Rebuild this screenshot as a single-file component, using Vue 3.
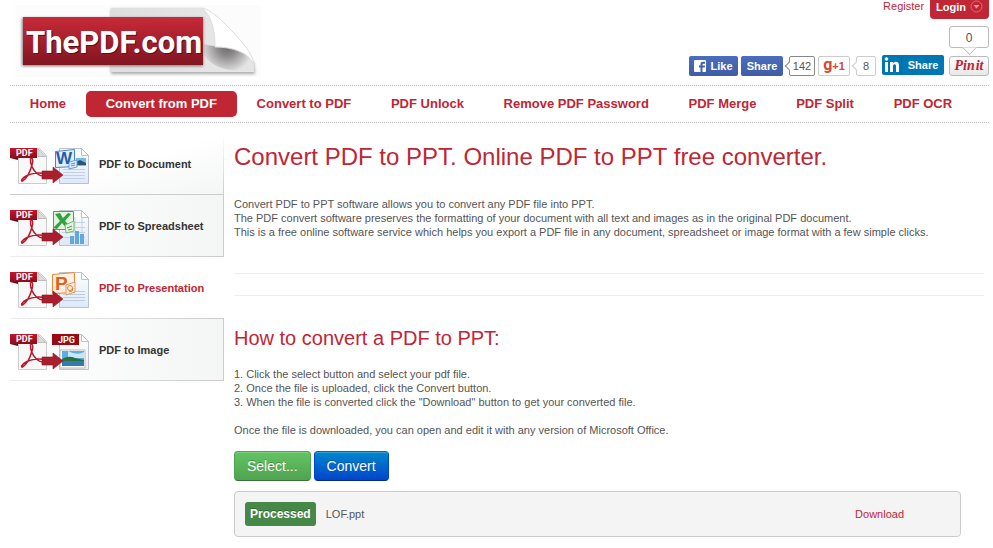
<template>
  <div class="page">
    <header class="header">
      <a href="#" class="logo" aria-label="ThePDF.com">
        <svg width="246" height="72" viewBox="0 0 246 72">
          <defs>
            <linearGradient id="logo-red" x1="0" y1="0" x2="0" y2="1">
              <stop offset="0" stop-color="#c92a38" />
              <stop offset="1" stop-color="#801520" />
            </linearGradient>
            <linearGradient id="logo-paper" x1="0" y1="0" x2="1" y2="0">
              <stop offset="0" stop-color="#dedede" />
              <stop offset="1" stop-color="#e8e8e8" />
            </linearGradient>
            <radialGradient id="logo-fold" gradientUnits="userSpaceOnUse" cx="212" cy="42" r="26">
              <stop offset="0" stop-color="#6b6b6b" />
              <stop offset="0.35" stop-color="#8d8a8a" />
              <stop offset="1" stop-color="#e4e4e4" />
            </radialGradient>
            <filter id="logo-blur"><feGaussianBlur stdDeviation="1.5" /></filter>
          </defs>
          <rect width="246" height="72" fill="#fcfcfc" />
          <path d="M96 4H187L239 58L240 69H96Z" fill="#aaa" filter="url(#logo-blur)" />
          <path d="M96 3H187L239 56V67H96Z" fill="url(#logo-paper)" />
          <path d="M188 38C194 42 206 41 214 42C226 43 235 49 239 57V66C226 66 198 68 188 48Z" fill="url(#logo-fold)" />
          <path d="M187 3C194 4 205 13 216 25C228 38 238 49 239 60C234 47 217 42 200 42C200 24 196 10 187 3Z" fill="#fff" stroke="#ddd" />
          <rect x="7" y="13" width="181" height="48" fill="#777" filter="url(#logo-blur)" />
          <rect x="8" y="12" width="180" height="48" fill="url(#logo-red)" />
          <text x="12" y="49" class="logo-text logo-text-shadow">ThePDF.com</text>
          <text x="11" y="48" class="logo-text">ThePDF.com</text>
        </svg>
      </a>

      <div class="header-side">
        <div class="account">
          <a href="#" class="register">Register</a>
          <button type="button" class="login">
            Login
            <svg width="13" height="13" viewBox="0 0 13 13">
              <circle cx="6.5" cy="6.5" r="5.5" fill="none" stroke="#e06a74" />
              <path d="M3.5 5H9.5L6.5 8.5Z" fill="#e9a0a6" />
            </svg>
          </button>
        </div>

        <div class="social">
          <button type="button" class="share-button facebook">
            <svg width="12" height="12" viewBox="0 0 12 12">
              <rect width="12" height="12" rx="1" fill="#fff" />
              <path d="M6.5 12V7.5H5V5.5H6.5V4C6.5 2.5 7.5 1.700 9 1.700H11V3.700H9.500C8.800 3.700 8.500 4 8.500 4.500V5.500H11L10.700 7.500H8.500V12Z" fill="#4262ae" />
            </svg>
            Like
          </button>
          <button type="button" class="share-button facebook facebook-share">Share</button>
          <span class="count">142</span>
          <button type="button" class="share-button google"><b>g</b>+1</button>
          <span class="count count-light">8</span>
          <button type="button" class="share-button linkedin">
            <svg width="20" height="20" viewBox="0 0 20 20">
              <path d="M3 7H6V17H3ZM8 7H11V8.500C12.500 6 17 6 17 10.500V17H14V11C14 8.500 11 8.500 11 11V17H8Z" fill="#fff" />
              <circle cx="4.500" cy="4" r="1.800" fill="#fff" />
              <path d="M19.500 0V20" stroke="#0369a3" />
            </svg>
            <span>Share</span>
          </button>
          <div class="pin">
            <span class="pin-count">0</span>
            <button type="button" class="share-button pinterest"><i>Pin</i><i>it</i></button>
          </div>
        </div>
      </div>
    </header>

    <nav class="menu">
      <a v-for="item in menu"
         :key="item"
         href="#"
         :class="{ active: item === 'Convert from PDF' }">{{ item }}</a>
    </nav>

    <div class="columns">
      <aside class="sidebar">
        <a v-for="tool in tools"
           :key="tool.id"
           href="#"
           :class="{ active: tool.id === 'ppt' }">
          <svg width="80" height="42" viewBox="0 -4 80 42">
            <defs>
              <linearGradient :id="`${tool.id}-band`" x1="0" y1="0" x2="0" y2="1">
                <stop offset="0" stop-color="#c3172b" />
                <stop offset="1" stop-color="#8b0d1b" />
              </linearGradient>
              <linearGradient :id="`${tool.id}-sheet`" x1="0" y1="0" x2="0" y2="1">
                <stop offset="0" stop-color="#fff" />
                <stop offset="1" :stop-color="tool.id === 'jpg' ? '#eee' : '#dde8f8'" />
              </linearGradient>
            </defs>

            <!-- source sheet -->
            <path d="M8.500 1.500H29.500L36.500 8.500V36.500H8.500Z" fill="#f8f8f8" stroke="#ccc" />
            <path d="M28 2L36 9.500H28Z" fill="#ddd" stroke="#aaa" stroke-width=".7" />
            <path d="M20.500 12C22.500 10 23.500 13 22 18C20 25 16 32 12.500 34C10.500 34.500 11.500 31 17 28.500C23 26 31 25 34.500 27C36 29.500 31 30 27 26.500C23 23 20 17 20.500 12Z" fill="none" stroke="#b71a2c" stroke-width="1.500" />
            <path d="M0 1H27V11H0Z" :fill="`url(#${tool.id}-band)`" />
            <path d="M0 11H8V13Z" fill="#680914" />
            <text x="6" y="9" class="tag">PDF</text>

            <!-- target sheet -->
            <path d="M49.500 1.500H71.500L78.500 8.500V36.500H49.500Z" :fill="`url(#${tool.id}-sheet)`" stroke="#aab5c4" stroke-width=".8" />
            <path d="M71.500 1.500V8.500H78.500Z" fill="#fff" stroke="#aab5c4" stroke-width=".8" />

            <g v-if="tool.id === 'doc'">
              <path d="M66 11H76V19H66Z" fill="#78bce8" />
              <path d="M66 15L70 13L76 16V18H66Z" fill="#285779" />
              <path d="M53 22.500H75M53 25.500H75M53 28.500H75M53 31.500H75" stroke="#c2d0e8" />
              <path d="M45.500 4.500L64.500 2.500V19.500L45.500 20.500Z" fill="#e2efff" stroke="#4884cb" />
              <text x="46" y="17" class="letter word">W</text>
              <path d="M59 15L67 13V20L59 22Z" fill="#deecff" stroke="#6b9cd8" />
              <path d="M61 17L65 16M61 19L65 18" stroke="#5e91ce" />
            </g>
            <g v-else-if="tool.id === 'xls'">
              <path d="M52 13.500H75M52 18.500H75M52 23.500H75M52 28.500H75M65 8V34M72 8V34" stroke="#c3d4e9" />
              <path d="M60 27H64V35H60ZM65 22H69V35H65ZM70 25H74V35H70Z" fill="#64a7db" />
              <path d="M43.500 2.500H63.500V20.500H43.500Z" fill="#e2f6df" stroke="#4ba34b" />
              <path d="M45 5L50 4L53 9L58 4L61 5L55 12L62 19L57 20L52 14L47 20L43 19L50 12Z" fill="#35a043" />
              <path d="M55 16L64 12V22L56 24Z" fill="#e2f6df" stroke="#77b779" />
              <path d="M57 19L62 17M58 21L62 20" stroke="#4b984d" />
            </g>
            <g v-else-if="tool.id === 'ppt'">
              <path d="M53 20.500H75M53 23.500H75M53 26.500H75M53 29.500H75" stroke="#bdcce6" />
              <path d="M42.500 3.500L64.500 1.500V21.500L42.500 22.500Z" fill="#fff0df" stroke="#ef833a" />
              <text x="45" y="19" class="letter powerpoint">P</text>
              <path d="M56 14L65 11V21L56 24Z" fill="#fff0df" stroke="#ed975d" />
              <circle cx="60" cy="17" r="2.500" fill="none" stroke="#e17d2c" />
              <path d="M63 17Q63 21 59 21" fill="none" stroke="#e17d2c" />
            </g>
            <g v-else>
              <path d="M50 17H75V35H50Z" fill="#fff" stroke="#bbb" />
              <path d="M52 18H74V33H52Z" fill="#5aaee2" />
              <path d="M58 18Q67 23 74 19V25H58Z" fill="#c8e6f5" />
              <path d="M52 26Q59 22 65 25L74 27V29H52Z" fill="#27713b" />
              <path d="M52 28H74V33H52Z" fill="#3779b3" />
              <path d="M42 1H69V12H42Z" fill="#9c0912" />
              <text x="48" y="10" class="tag">JPG</text>
            </g>

            <path d="M32 24H43V20L53 28L43 36V32H32Z" fill="#a91f2d" stroke="#8d1422" stroke-width=".6" />
          </svg>
          <span>{{ tool.title }}</span>
        </a>
      </aside>

      <main class="content">
        <h1>Convert PDF to PPT. Online PDF to PPT free converter.</h1>
        <p>
          Convert PDF to PPT software allows you to convert any PDF file into PPT.<br>
          The PDF convert software preserves the formatting of your document with all text and images as in the original PDF document.<br>
          This is a free online software service which helps you export a PDF file in any document, spreadsheet or image format with a few simple clicks.
        </p>
        <div class="divider"></div>

        <h2>How to convert a PDF to PPT:</h2>
        <p>
          1. Click the select button and select your pdf file.<br>
          2. Once the file is uploaded, click the Convert button.<br>
          3. When the file is converted click the "Download" button to get your converted file.
        </p>
        <p>Once the file is downloaded, you can open and edit it with any version of Microsoft Office.</p>

        <div class="actions">
          <button type="button" class="btn btn-select">Select...</button>
          <button type="button" class="btn btn-convert">Convert</button>
        </div>

        <div class="result">
          <span class="status">Processed</span>
          <span class="file-name">LOF.ppt</span>
          <a href="#">Download</a>
        </div>
      </main>
    </div>
  </div>
</template>

<script setup>

const menu = [
  'Home',
  'Convert from PDF',
  'Convert to PDF',
  'PDF Unlock',
  'Remove PDF Password',
  'PDF Merge',
  'PDF Split',
  'PDF OCR'
]

const tools = [
  {id: 'doc', title: 'PDF to Document'},
  {id: 'xls', title: 'PDF to Spreadsheet'},
  {id: 'ppt', title: 'PDF to Presentation'},
  {id: 'jpg', title: 'PDF to Image'}
]

</script>

<style>
body {
  background: #fff;
}
</style>

<style scoped>
.page {
  padding: 0 4px 0 10px;
  font: 11px/14px "Liberation Sans", Arial, sans-serif;
  color: #555;
}

a {
  color: #c02634;
  text-decoration: none;
}

button {
  font-family: inherit;
  cursor: pointer;
}

.header {
  display: flex;
  justify-content: space-between;
  height: 85px;
}

.logo {
  padding: 5px 0 0 5px;
}

.logo-text {
  font: bold 31px Roboto, sans-serif;
  fill: #fff;
}

.logo-text-shadow {
  fill: #5c1018;
}

.header-side {
  display: flex;
  flex-direction: column;
  justify-content: space-between;
  align-items: flex-end;
  padding-bottom: 9px;
}

.account {
  display: flex;
  gap: 6px;
}

.register {
  line-height: 12px;
}

.login {
  display: flex;
  align-items: center;
  gap: 4px;
  height: 19px;
  padding: 0 6px 6px;
  border: 0;
  border-radius: 0 0 4px 4px;
  background: #c02634;
  color: #fff;
  font-size: 11px;
  font-weight: bold;
}

.social {
  display: flex;
  align-items: flex-end;
  gap: 3px;
}

.share-button {
  display: flex;
  align-items: center;
  justify-content: center;
  box-sizing: border-box;
  height: 20px;
  padding: 0;
  border: 0;
  border-radius: 2px;
  font-size: 11px;
  font-weight: bold;
  color: #fff;
}

.facebook {
  gap: 4px;
  width: 49px;
  background: linear-gradient(#4b6dbb, #3f5ca6);
}

.facebook-share {
  width: 42px;
}

.count {
  position: relative;
  box-sizing: border-box;
  min-width: 26px;
  height: 20px;
  margin-left: 3px;
  border: 1px solid #888;
  border-radius: 2px;
  line-height: 18px;
  text-align: center;
}

.count::before {
  content: "";
  position: absolute;
  left: -4px;
  top: 6px;
  width: 5px;
  height: 5px;
  border: solid #888;
  border-width: 0 0 1px 1px;
  background: #fff;
  transform: rotate(45deg);
}

.count-light {
  min-width: 20px;
  border-color: #ccc;
}

.count-light::before {
  border-color: #ccc;
}

.google {
  width: 32px;
  border: 1px solid #ccc;
  background: #fff;
  color: #d34836;
  font-size: 11px;
}

.google b {
  padding-bottom: 3px;
  font: bold 16px/14px Roboto, sans-serif;
}

.linkedin {
  width: 62px;
  margin: 0 2px 1px 3px;
  background: #0077b5;
}

.linkedin span {
  flex: 1;
}

.pin {
  display: flex;
  flex-direction: column;
  gap: 8px;
}

.pin-count {
  position: relative;
  box-sizing: border-box;
  width: 40px;
  height: 22px;
  border: 1px solid #bbb;
  border-radius: 3px;
  font-size: 12px;
  line-height: 22px;
  text-align: center;
}

.pin-count::after {
  content: "";
  position: absolute;
  left: 14px;
  bottom: -6px;
  width: 10px;
  height: 10px;
  border: solid #bbb;
  border-width: 0 1px 1px 0;
  background: #fff;
  clip-path: polygon(100% 0, 100% 100%, 0 100%);
  transform: rotate(45deg);
}

.pinterest {
  gap: 1px;
  width: 40px;
  border: 1px solid #bbb;
  border-radius: 3px;
  background: linear-gradient(#fff, #e8e8e8);
  color: #c1202c;
  font-family: "Liberation Serif", serif;
  font-size: 14px;
}

.menu {
  display: flex;
  align-items: center;
  height: 36px;
  padding-right: 17px;
  border: dotted #bbb;
  border-width: 1px 0;
}

.menu a {
  flex: 1 1 auto;
  border-radius: 5px;
  font-size: 13px;
  font-weight: bold;
  line-height: 26px;
  text-align: center;
}

.menu .active {
  background: #c02634;
  color: #fff;
}

.columns {
  display: flex;
  gap: 10px;
}

.sidebar {
  flex: none;
  width: 214px;
  padding-top: 10px;
}

.sidebar a {
  display: flex;
  align-items: center;
  gap: 9px;
  box-sizing: border-box;
  height: 62px;
  border: solid #ccc;
  border-width: 0 1px 1px 0;
  border-image: linear-gradient(to right, #eee, #ccc) 1;
  background: linear-gradient(to right, #fff, #f4f5f5);
  color: #333;
  font-weight: bold;
}

.sidebar a:first-child {
  border-image: linear-gradient(to top, #ccc, #fff) 1;
  background: linear-gradient(to bottom right, #fff 50%, #f4f5f5);
}

.sidebar .active {
  border-right-width: 0;
  background: #fff;
  color: #c02634;
}

.tag {
  font: bold 9px Roboto, sans-serif;
  fill: #fff;
}

.letter {
  font: bold 17px "Liberation Sans", sans-serif;
}

.word {
  fill: #255aa8;
}

.powerpoint {
  font-size: 19px;
  fill: #df6221;
}

.content {
  flex: 1;
  min-width: 0;
  padding: 20px 5px 0 0;
}

h1,
h2 {
  margin: 0;
  color: #c02634;
  font-weight: normal;
}

h1 {
  margin-bottom: 26px;
  font-size: 24px;
  line-height: 28px;
}

h2 {
  margin-bottom: 17px;
  font-size: 20px;
  line-height: 24px;
}

p {
  margin: 0 0 14px;
}

.divider {
  height: 21px;
  margin: 34px 0 30px;
  border: solid #eee;
  border-width: 1px 0;
}

.actions {
  display: flex;
  gap: 3px;
}

.btn {
  height: 30px;
  padding: 0 12px;
  border: 1px solid;
  border-radius: 4px;
  box-shadow: inset 0 1px 0 rgba(255, 255, 255, 0.2);
  color: #fff;
  font-size: 14px;
  text-shadow: 0 -1px 0 rgba(0, 0, 0, 0.25);
}

.btn-select {
  border-color: #51a351 #51a351 #387038;
  background: linear-gradient(#62c462, #51a351);
}

.btn-convert {
  border-color: #0064cc #0044cc #002a80;
  background: linear-gradient(#0088cc, #0044cc);
}

.result {
  display: flex;
  align-items: center;
  box-sizing: border-box;
  height: 46px;
  margin: 10px 23px 0 0;
  padding: 0 56px 0 10px;
  border: 1px solid #ccc;
  border-radius: 4px;
  background: #f4f4f4;
}

.status {
  margin-right: 10px;
  padding: 0 5px;
  border-radius: 3px;
  background: #468847;
  color: #fff;
  font-size: 12px;
  font-weight: bold;
  line-height: 24px;
  text-shadow: 0 -1px 0 rgba(0, 0, 0, 0.25);
}

.file-name {
  flex: 1;
}
</style>
